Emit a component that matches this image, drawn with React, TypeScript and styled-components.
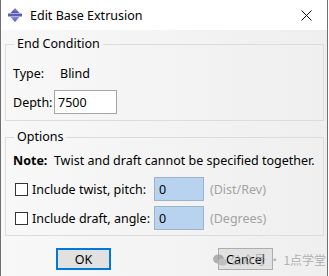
import styled, { createGlobalStyle } from "styled-components";

const GlobalStyle = createGlobalStyle`
  html, body {
    margin: 0;
    padding: 0;
    background: #ffffff;
  }
  body {
    font-family: "Noto Sans", "Noto Sans CJK SC", sans-serif;
    font-size: 12.5px;
    color: #000;
  }
`;

const FONT = `"Noto Sans", "Noto Sans CJK SC", sans-serif`;

const AppIcon = () => (
  <svg width="14" height="14" viewBox="0 0 14 14">
    <defs>
      <linearGradient id="ig" x1="0" y1="0" x2="0" y2="1">
        <stop offset="0" stopColor="#8d91d8" />
        <stop offset="1" stopColor="#4f53a6" />
      </linearGradient>
    </defs>
    <polygon points="7,0 11.5,5 2.5,5" fill="url(#ig)" />
    <rect x="0" y="5.5" width="14" height="3" fill="#5c60b4" />
    <polygon points="2.5,9 11.5,9 7,14" fill="url(#ig)" />
  </svg>
);

const CloseIcon = () => (
  <svg width="11" height="11" viewBox="0 0 11 11">
    <path d="M0.5 0.5 L10.5 10.5 M10.5 0.5 L0.5 10.5" stroke="#111" strokeWidth="1" />
  </svg>
);

const WeChatMark = () => (
  <svg width="14" height="12" viewBox="0 0 14 12">
    <ellipse cx="5.5" cy="5" rx="5.5" ry="4.5" fill="#9a9a9a" />
    <ellipse cx="9.5" cy="8" rx="4.5" ry="3.6" fill="#b5b5b5" />
  </svg>
);

export default function App() {
  return (
    <>
      <GlobalStyle />
      <Window>
        <TitleBar>
          <TitleIcon>
            <AppIcon />
          </TitleIcon>
          <TitleText>Edit Base Extrusion</TitleText>
          <CloseButton>
            <CloseIcon />
          </CloseButton>
        </TitleBar>

        <Body>
          <Group $pt={10} $pb={6}>
            <Legend>End Condition</Legend>
            <FieldRow>
              <FieldLabel $width={47}>Type:</FieldLabel>
              <span>Blind</span>
            </FieldRow>
            <FieldRow $mt={7}>
              <FieldLabel $width={41}>Depth:</FieldLabel>
              <TextInput defaultValue="7500" />
            </FieldRow>
          </Group>

          <Group $mt={7} $pt={6} $pb={5}>
            <Legend>Options</Legend>
            <NoteLine>
              <b>Note:</b>&nbsp; Twist and draft cannot be specified together.
            </NoteLine>
            <OptionGrid>
              <CheckBox />
              <span>Include twist, pitch:</span>
              <ValueInput defaultValue="0" />
              <Unit>(Dist/Rev)</Unit>
              <CheckBox />
              <span>Include draft, angle:</span>
              <ValueInput defaultValue="0" />
              <Unit>(Degrees)</Unit>
            </OptionGrid>
          </Group>

          <ButtonRow>
            <DialogButton $primary>OK</DialogButton>
            <DialogButton>Cancel</DialogButton>
          </ButtonRow>

          <Watermark>
            <WeChatMark />
            <span>公众号 · 1点学堂</span>
          </Watermark>
        </Body>
      </Window>
    </>
  );
}

const Window = styled.div`
  position: relative;
  width: 328px;
  height: 276px;
  box-sizing: border-box;
  border-left: 1px solid #707070;
  border-right: 1px solid #707070;
  display: flex;
  flex-direction: column;
  overflow: hidden;
`;

const TitleBar = styled.div`
  height: 30px;
  flex: none;
  background: #ffffff;
  display: flex;
  align-items: center;
  padding-left: 7px;
`;

const TitleIcon = styled.span`
  display: flex;
  width: 14px;
  height: 14px;
  margin-right: 8px;
`;

const TitleText = styled.span`
  font-family: ${FONT};
  font-size: 12.5px;
  flex: 1;
`;

const CloseButton = styled.span`
  display: flex;
  width: 11px;
  height: 11px;
  margin-right: 15px;
`;

const Body = styled.div`
  position: relative;
  flex: 1;
  background: linear-gradient(to right, #f8f8f8, #efefef);
  padding: 5px 3px 0 4px;
  display: flex;
  flex-direction: column;
`;

const Group = styled.fieldset<{ $mt?: number; $pt?: number; $pb?: number }>`
  margin: ${(p) => p.$mt ?? 0}px 0 0 0;
  padding: ${(p) => p.$pt ?? 8}px 7px ${(p) => p.$pb ?? 6}px 7px;
  border: 1px solid #dcdcdc;
  min-width: 0;
`;

const Legend = styled.legend`
  font-family: ${FONT};
  font-size: 12.5px;
  line-height: 18px;
  padding: 0 3px;
  margin-left: 1px;
`;

const FieldRow = styled.div<{ $mt?: number }>`
  display: flex;
  align-items: center;
  height: ${(p) => (p.$mt ? 24 : 20)}px;
  margin-top: ${(p) => p.$mt ?? 0}px;
`;

const FieldLabel = styled.span<{ $width: number }>`
  width: ${(p) => p.$width}px;
`;

const TextInput = styled.input`
  width: 63px;
  height: 24px;
  box-sizing: border-box;
  border: 1px solid #a5a5a5;
  background: #ffffff;
  padding: 0 3px;
  font-family: ${FONT};
  font-size: 12.5px;
  outline: none;
`;

const NoteLine = styled.div`
  height: 18px;
  line-height: 18px;
  white-space: nowrap;
`;

const OptionGrid = styled.div`
  display: grid;
  grid-template-columns: 13px max-content 50px auto;
  column-gap: 4px;
  row-gap: 5px;
  align-items: center;
  margin-top: 7px;
  padding-left: 2px;
`;

const CheckBox = styled.span`
  width: 13px;
  height: 13px;
  box-sizing: border-box;
  border: 1px solid #333;
  background: #fff;
`;

const ValueInput = styled.input`
  width: 50px;
  height: 24px;
  box-sizing: border-box;
  border: 1px solid #9fb3c8;
  background: #b8d3ef;
  padding: 0 4px;
  font-family: ${FONT};
  font-size: 12.5px;
  outline: none;
`;

const Unit = styled.span`
  color: #a3a3a3;
  margin-left: 2px;
`;

const ButtonRow = styled.div`
  display: flex;
  justify-content: center;
  gap: 107px;
  margin-top: 12px;
`;

const DialogButton = styled.button<{ $primary?: boolean }>`
  width: 55px;
  height: 22px;
  box-sizing: border-box;
  background: #e1e1e1;
  border: ${(p) => (p.$primary ? "2px solid #0078d7" : "1px solid #adadad")};
  font-family: ${FONT};
  font-size: 12.5px;
  color: #000;
  padding: 0;
`;

const Watermark = styled.div`
  position: absolute;
  left: 212px;
  bottom: 8px;
  display: flex;
  align-items: center;
  gap: 3px;
  color: #9c9c9c;
  opacity: 0.75;
  font-family: "Noto Sans CJK SC", sans-serif;
  font-size: 12px;
  pointer-events: none;
`;
